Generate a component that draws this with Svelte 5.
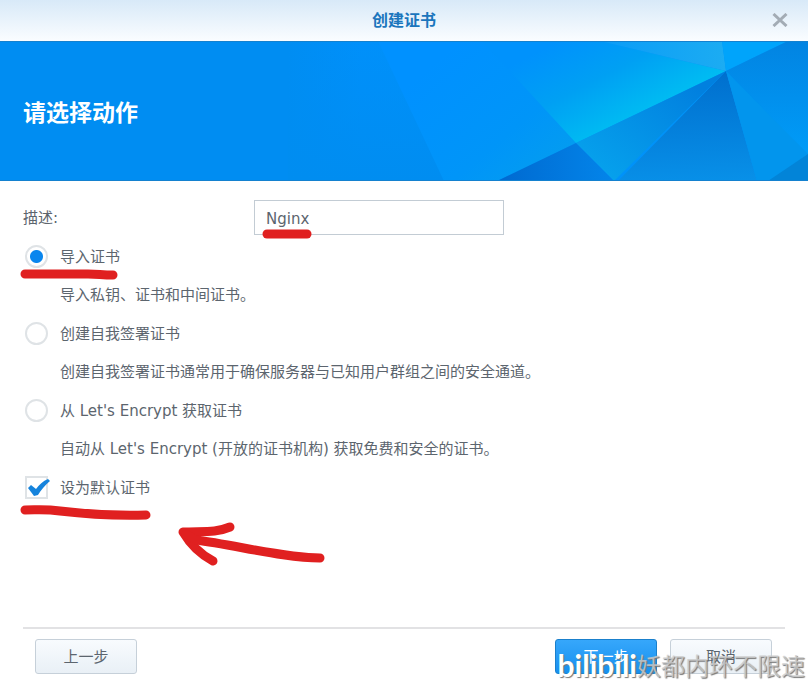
<script lang="ts">
    type Action = {
        id: string;
        label: string;
        hint: string;
    };

    const actions: Action[] = [
        {
            id: "import",
            label: "导入证书",
            hint: "导入私钥、证书和中间证书。",
        },
        {
            id: "self-signed",
            label: "创建自我签署证书",
            hint: "创建自我签署证书通常用于确保服务器与已知用户群组之间的安全通道。",
        },
        {
            id: "lets-encrypt",
            label: "从 Let's Encrypt 获取证书",
            hint: "自动从 Let's Encrypt (开放的证书机构) 获取免费和安全的证书。",
        },
    ];

    let description = $state("Nginx");
    let action = $state("import");
    let isDefault = $state(true);
</script>

<div class="dialog">
    <header class="titlebar">
        <h1>创建证书</h1>
        <button type="button" class="close" aria-label="关闭">
            <svg viewBox="0 0 16 14" width="16" height="14">
                <path d="M1.5 1 14.5 13M14.5 1 1.5 13" />
            </svg>
        </button>
    </header>

    <div class="banner">
        <svg
            class="facets"
            viewBox="0 0 520 140"
            width="520"
            height="140"
            preserveAspectRatio="xMaxYMid slice"
            aria-hidden="true"
        >
            <defs>
                <linearGradient id="fade" x1="0" x2="1" y1="0" y2="0">
                    <stop offset="0" stop-color="#008df2" />
                    <stop offset="0.14" stop-color="#0090fa" />
                    <stop offset="1" stop-color="#0094f8" />
                </linearGradient>
                <linearGradient id="base" x1="0" x2="0" y1="0" y2="1">
                    <stop offset="0" stop-color="#008df2" stop-opacity="0" />
                    <stop offset="1" stop-color="#008df0" />
                </linearGradient>
                <linearGradient id="sheet" gradientUnits="userSpaceOnUse" x1="160" y1="10" x2="270" y2="140">
                    <stop offset="0" stop-color="#0091ff" />
                    <stop offset="0.6" stop-color="#0095f8" />
                    <stop offset="1" stop-color="#049eee" />
                </linearGradient>
                <linearGradient id="glow" gradientUnits="userSpaceOnUse" x1="270" y1="0" x2="318" y2="92">
                    <stop offset="0" stop-color="#0092fc" />
                    <stop offset="0.5" stop-color="#00a0f3" />
                    <stop offset="1" stop-color="#00bcf2" />
                </linearGradient>
                <linearGradient id="crest" x1="0" x2="1" y1="0" y2="0">
                    <stop offset="0" stop-color="#0b9cf7" />
                    <stop offset="1" stop-color="#1cacf2" />
                </linearGradient>
                <linearGradient id="wing" gradientUnits="userSpaceOnUse" x1="400" y1="40" x2="330" y2="140">
                    <stop offset="0" stop-color="#0180df" />
                    <stop offset="1" stop-color="#06a0ec" />
                </linearGradient>
                <linearGradient id="deep" gradientUnits="userSpaceOnUse" x1="435" y1="30" x2="440" y2="140">
                    <stop offset="0" stop-color="#006fce" />
                    <stop offset="1" stop-color="#0890e8" />
                </linearGradient>
                <linearGradient id="shard" x1="0" x2="1" y1="0" y2="0">
                    <stop offset="0" stop-color="#0069d0" />
                    <stop offset="1" stop-color="#0385ea" />
                </linearGradient>
                <linearGradient id="right" x1="0" x2="0" y1="0" y2="1">
                    <stop offset="0" stop-color="#0284e2" />
                    <stop offset="1" stop-color="#009cf8" />
                </linearGradient>
            </defs>
            <path d="M0 0H520V140H0Z" fill="url(#fade)" />
            <path d="M0 0H156V140H0Z" fill="url(#base)" />
            <path d="M90 0H194L288 102 209 140H156Z" fill="url(#sheet)" />
            <path d="M194 0H312L438 30 288 102Z" fill="url(#glow)" />
            <path d="M312 0H434L438 30Z" fill="url(#crest)" />
            <path d="M434 0H500L438 30Z" fill="#00a4fb" />
            <path d="M500 0H520V115L438 30Z" fill="url(#right)" />
            <path d="M438 30 288 102 326 140Z" fill="url(#wing)" />
            <path d="M288 102 326 140H209Z" fill="url(#shard)" />
            <path d="M438 30 330 140H469Z" fill="url(#deep)" />
            <path d="M438 30 520 113V140H469Z" fill="#0295ed" />
            <path d="M520 113V140H480Z" fill="#0284d8" />
        </svg>
        <h2>请选择动作</h2>
    </div>

    <form class="content" onsubmit={(event) => event.preventDefault()}>
        <div class="field">
            <label for="description">描述:</label>
            <input id="description" type="text" bind:value={description} />
        </div>

        {#each actions as item (item.id)}
            <div class="option">
                <input
                    id={item.id}
                    type="radio"
                    name="action"
                    value={item.id}
                    aria-describedby="{item.id}-hint"
                    bind:group={action}
                />
                <label for={item.id}>{item.label}</label>
            </div>
            <p id="{item.id}-hint" class="hint">{item.hint}</p>
        {/each}

        <div class="option">
            <span class="check">
                <input id="default" type="checkbox" bind:checked={isDefault} />
                {#if isDefault}
                    <svg viewBox="0 0 24 24" width="24" height="24" aria-hidden="true">
                        <path d="M2 12 5 9 10 13C13 9 17 5 22 3L24 5C19 9 15 14 12 19L8 20Z" />
                    </svg>
                {/if}
            </span>
            <label for="default">设为默认证书</label>
        </div>

        <svg class="marks" viewBox="0 0 340 400" width="340" height="400" aria-hidden="true">
            <path d="M267 53H307" />
            <path d="M25 93H88C98 93 102 94 113 94" />
            <path d="M25 329C38 329 45 328 60 330C85 333 110 335 146 334" />
            <path d="M230 346C216 352 202 350 183 351C190 363 200 373 213 380" />
            <path d="M186 353 196 359C235 364 285 377 320 377" />
        </svg>
    </form>

    <footer>
        <button type="button">上一步</button>
        <div class="group">
            <button type="button" class="primary">下一步</button>
            <button type="button">取消</button>
        </div>
    </footer>

    <div class="watermark">
        <span class="brand">bilibili</span>
        <span>妖都内环不限速</span>
    </div>
</div>

<style>
    :global(body) {
        margin: 0;
    }

    .dialog {
        position: relative;
        display: flex;
        flex-direction: column;
        min-height: 100vh;
        overflow: hidden;
        background: #fff;
        color: #5c656e;
        font-family: "DejaVu Sans", "Noto Sans CJK SC", sans-serif;
        font-size: 15px;
        font-weight: 400;
        line-height: 20px;
    }

    h1,
    h2,
    p {
        margin: 0;
    }

    input,
    button {
        box-sizing: border-box;
        margin: 0;
        color: inherit;
        font: inherit;
    }

    .titlebar {
        position: relative;
        display: flex;
        align-items: center;
        justify-content: center;
        box-sizing: border-box;
        height: 41px;
        padding-bottom: 3px;
        background: linear-gradient(#d8e9f8, #fafdff);
    }

    h1 {
        color: #1b76bd;
        font-family: "Noto Sans CJK SC", sans-serif;
        font-size: 16px;
        font-weight: 700;
    }

    .close {
        position: absolute;
        top: 8px;
        right: 16px;
        display: grid;
        place-items: center;
        width: 24px;
        height: 24px;
        padding: 0;
        border: 0;
        background: none;
    }

    .close path {
        fill: none;
        stroke: #a3acb5;
        stroke-width: 3;
    }

    .banner {
        position: relative;
        display: flex;
        align-items: center;
        box-sizing: border-box;
        height: 140px;
        padding: 0 23px;
        border-top: 1px solid #1481cf;
        border-bottom: 1px solid #1481cf;
        background: #008df2;
    }

    .facets {
        position: absolute;
        top: 0;
        right: 0;
        height: 100%;
    }

    h2 {
        position: relative;
        color: #fff;
        font-family: "Noto Sans CJK SC", sans-serif;
        font-size: 23px;
        font-weight: 700;
    }

    .content {
        position: relative;
        flex: 1;
        padding: 17px 23px 0;
    }

    .field {
        display: grid;
        grid-template-columns: 231px 250px;
        align-items: center;
        height: 39px;
    }

    .field input {
        height: 35px;
        padding: 2px 11px 0;
        border: 1px solid #c3ccd4;
        background: #fff;
        outline: 0;
    }

    .option {
        display: flex;
        align-items: center;
        gap: 12px;
        height: 39px;
        padding-left: 2px;
    }

    .option input {
        flex: none;
        appearance: none;
        width: 23px;
        height: 23px;
        border: 2px solid #dfe3e6;
        background: #fff;
    }

    .option input[type="radio"] {
        border-radius: 50%;
    }

    .option input[type="radio"]:checked {
        background: radial-gradient(circle, #0a86ee 6px, #fff 7px);
    }

    .check {
        position: relative;
        display: flex;
    }

    .check svg {
        position: absolute;
        top: 0;
        left: 1px;
        pointer-events: none;
    }

    .check path {
        fill: #1583dc;
    }

    .hint {
        display: flex;
        align-items: center;
        min-height: 38px;
        padding-left: 37px;
    }

    .marks {
        position: absolute;
        top: 0;
        left: 0;
        pointer-events: none;
    }

    .marks path {
        fill: none;
        stroke: #e02020;
        stroke-width: 9;
        stroke-linecap: round;
        stroke-linejoin: round;
    }

    footer {
        display: flex;
        justify-content: space-between;
        margin: 0 23px;
        padding: 10px 13px 8px 12px;
        border-top: 2px solid #e2e2e4;
    }

    .group {
        display: flex;
        gap: 13px;
    }

    footer button {
        width: 102px;
        height: 35px;
        padding: 0;
        border: 1px solid #c6d0d9;
        border-radius: 3px;
        background: linear-gradient(#f8fbfe, #e9f0f6);
    }

    footer .primary {
        border-color: #1a80cc;
        background: linear-gradient(#36a7fb, #1790ef);
        color: #fff;
    }

    .watermark {
        position: absolute;
        right: 3px;
        bottom: 1px;
        display: flex;
        align-items: center;
        height: 32px;
        color: rgba(205, 205, 205, 0.8);
        font-family: "Noto Sans CJK SC", sans-serif;
        font-size: 24px;
        line-height: 32px;
        text-shadow: 1px 1px 1px #777;
        pointer-events: none;
    }

    .brand {
        color: #fff;
        font-family: Lato, sans-serif;
        font-size: 30px;
        font-weight: 700;
    }
</style>
